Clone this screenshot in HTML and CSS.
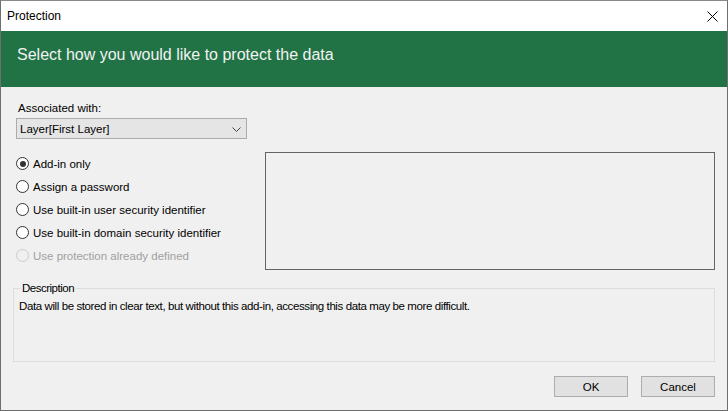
FILE: index.html
```html
<!DOCTYPE html>
<html lang="en">
  <head>
    <meta charset="UTF-8" />
    <title>Protection</title>
    <link rel="stylesheet" href="styles.css">
  </head>
  <body>
    <div class="window">
      <!-- Title bar -->
      <div class="titlebar">
        <span class="title">Protection</span>
        <span class="close-btn">
          <svg width="11" height="11" viewBox="0 0 11 11">
            <path d="M0.5 0.5 L10.5 10.5 M10.5 0.5 L0.5 10.5" stroke="#000" stroke-width="1" fill="none" />
          </svg>
        </span>
      </div>

      <!-- Green header -->
      <div class="banner">Select how you would like to protect the data</div>

      <div class="content">
        <div class="assoc">
          <label class="assoc-label">Associated with:</label>
          <div class="dropdown">
            <span>Layer[First Layer]</span>
            <svg class="chevron" width="9" height="5" viewBox="0 0 9 5">
              <path d="M0.5 0.5 L4.5 4.5 L8.5 0.5" stroke="#444" stroke-width="1" fill="none" />
            </svg>
          </div>
        </div>

        <div class="options">
          <div class="radios">
            <div class="radio-row"><span class="radio checked"></span>Add-in only</div>
            <div class="radio-row"><span class="radio"></span>Assign a password</div>
            <div class="radio-row"><span class="radio"></span>Use built-in user security identifier</div>
            <div class="radio-row"><span class="radio"></span>Use built-in domain security identifier</div>
            <div class="radio-row disabled"><span class="radio"></span>Use protection already defined</div>
          </div>
          <div class="detail-box"></div>
        </div>

        <fieldset class="description">
          <legend>Description</legend>
          <p>Data will be stored in clear text, but without this add-in, accessing this data may be more difficult.</p>
        </fieldset>

        <div class="buttons">
          <button>OK</button>
          <button>Cancel</button>
        </div>
      </div>
    </div>
  </body>
</html>
```

FILE: styles.css
```css
html, body {
  margin: 0;
  padding: 0;
}

body {
  font-family: "Liberation Sans", Arial, sans-serif;
  font-size: 11.5px;
  color: #000;
  background-color: #f0f0f0;
}

.window {
  width: 728px;
  height: 411px;
  box-sizing: border-box;
  border: 1px solid #6f6f6f;
  border-top-color: #8a8a8a;
  background-color: #f0f0f0;
  display: flex;
  flex-direction: column;
}

/* Title bar */
.titlebar {
  height: 30px;
  background-color: #fff;
  display: flex;
  align-items: center;
  justify-content: space-between;
  padding: 0 9px 0 6px;
}

.title {
  font-size: 12px;
}

.close-btn {
  display: flex;
  padding-top: 1px;
}

/* Green banner */
.banner {
  height: 56px;
  background-color: #217346;
  color: #f2f2f2;
  font-size: 16px;
  display: flex;
  align-items: center;
  padding-left: 16px;
  padding-bottom: 9px;
  box-sizing: border-box;
}

.content {
  padding: 0 12px;
  display: flex;
  flex-direction: column;
}

.assoc {
  margin-top: 14px;
  margin-left: 3px;
}

.assoc-label {
  display: block;
  line-height: 14px;
  margin-left: 2px;
}

.dropdown {
  margin-top: 3px;
  width: 231px;
  height: 21px;
  box-sizing: border-box;
  background-color: #e5e5e5;
  border: 1px solid #acacac;
  display: flex;
  align-items: center;
  justify-content: space-between;
  padding: 0 5px 0 3px;
}

.chevron {
  margin-top: 1px;
}

/* Option radios */
.options {
  display: flex;
  justify-content: space-between;
  margin-top: 13px;
}

.radios {
  margin-left: 3px;
  display: flex;
  flex-direction: column;
}

.radio-row {
  height: 23px;
  display: flex;
  align-items: center;
}

.radio {
  width: 13px;
  height: 13px;
  box-sizing: border-box;
  border: 1px solid #333;
  border-radius: 50%;
  background-color: #fff;
  margin-right: 4px;
  display: flex;
  align-items: center;
  justify-content: center;
}

.radio.checked::after {
  content: "";
  width: 6px;
  height: 6px;
  border-radius: 50%;
  background-color: #333;
}

.radio-row.disabled {
  color: #a0a0a0;
}

.radio-row.disabled .radio {
  border-color: #cccccc;
  background-color: #f0f0f0;
}

.detail-box {
  width: 450px;
  height: 118px;
  box-sizing: border-box;
  border: 1px solid #646464;
}

/* Description group */
.description {
  margin: 11px 0 0 0;
  height: 81px;
  box-sizing: border-box;
  border: 1px solid #dcdcdc;
  padding: 0 5px;
}

.description legend {
  padding: 0 2px;
  margin-left: 1px;
  line-height: 14px;
  letter-spacing: -0.5px;
}

.description p {
  margin: 5px 0 0 0;
  letter-spacing: -0.4px;
}

/* Bottom buttons */
.buttons {
  display: flex;
  justify-content: flex-end;
  gap: 13px;
  margin-top: 14px;
}

button {
  width: 74px;
  height: 21px;
  box-sizing: border-box;
  background-color: #e1e1e1;
  border: 1px solid #adadad;
  font-family: "Liberation Sans", Arial, sans-serif;
  font-size: 11.5px;
  color: #000;
  padding: 0;
}
```
